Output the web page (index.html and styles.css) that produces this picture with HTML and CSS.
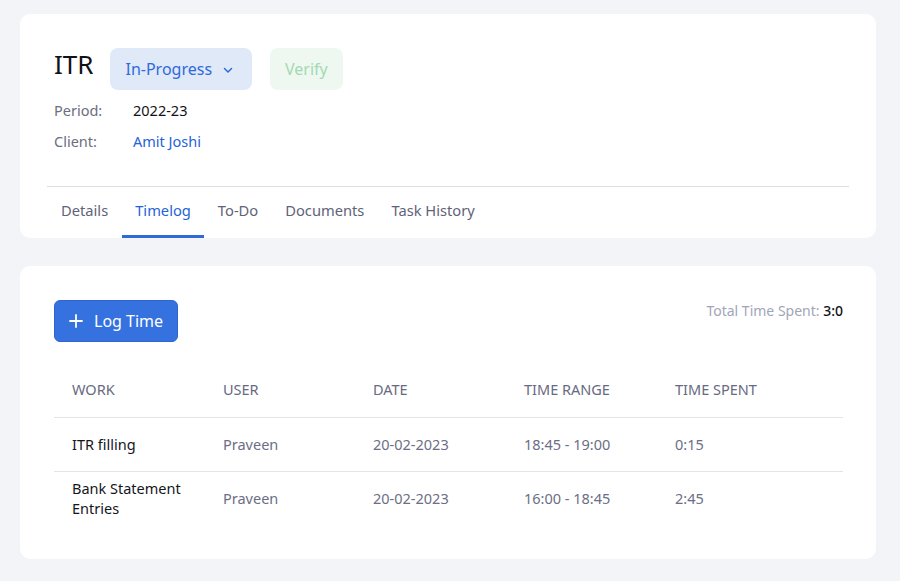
FILE: index.html
```html
<!DOCTYPE html>
<html>
<head>
<meta charset="utf-8">
<link rel="stylesheet" href="styles.css">
</head>
<body>
<div class="page">
  <section class="card task-card">
    <div class="task-head">
      <div class="title-row">
        <h1 class="title">ITR</h1>
        <button class="status-btn">In-Progress
          <svg class="chev" width="12" height="12" viewBox="0 0 12 12"><path d="M2.5 4.5 L6 8 L9.5 4.5" fill="none" stroke="#2f6bd8" stroke-width="1.5" stroke-linecap="round" stroke-linejoin="round"/></svg>
        </button>
        <button class="verify-btn">Verify</button>
      </div>
      <div class="meta-row"><span class="meta-label">Period:</span><span class="meta-value">2022-23</span></div>
      <div class="meta-row"><span class="meta-label">Client:</span><span class="meta-value link">Amit Joshi</span></div>
    </div>
    <nav class="tabs">
      <a class="tab">Details</a>
      <a class="tab active">Timelog</a>
      <a class="tab">To-Do</a>
      <a class="tab">Documents</a>
      <a class="tab">Task History</a>
    </nav>
  </section>

  <section class="card timelog-card">
    <div class="toolbar">
      <button class="log-btn">
        <svg width="14" height="14" viewBox="0 0 14 14"><path d="M7 1 V13 M1 7 H13" stroke="#fff" stroke-width="1.8" stroke-linecap="round"/></svg>
        Log Time
      </button>
      <div class="total">Total Time Spent: <span class="total-val">3:0</span></div>
    </div>
    <table class="log-table">
      <colgroup>
        <col class="c1"><col class="c2"><col class="c3"><col class="c4"><col>
      </colgroup>
      <thead>
        <tr><th>Work</th><th>User</th><th>Date</th><th>Time Range</th><th>Time Spent</th></tr>
      </thead>
      <tbody>
        <tr><td class="work">ITR filling</td><td>Praveen</td><td>20-02-2023</td><td>18:45 - 19:00</td><td>0:15</td></tr>
        <tr><td class="work">Bank Statement Entries</td><td>Praveen</td><td>20-02-2023</td><td>16:00 - 18:45</td><td>2:45</td></tr>
      </tbody>
    </table>
  </section>
</div>
</body>
</html>
```

FILE: styles.css
```css
* { box-sizing: border-box; }
html, body { margin: 0; padding: 0; }
body {
  background: #f3f4f8;
  font-family: "Noto Sans", "Open Sans", sans-serif;
  color: #15161c;
}
.page {
  padding: 14px 24px 0 20px;
  display: flex;
  flex-direction: column;
  gap: 28px;
}
.card {
  background: #fff;
  border-radius: 10px;
}
.task-card {
  padding: 34px 27px 0;
}
.task-head {
  padding: 0 7px 35px;
  border-bottom: 1px solid #dfe0e4;
}
.title-row {
  display: flex;
  align-items: center;
  height: 42px;
}
.title {
  margin: 0 17px 0 0;
  font-size: 26px;
  font-weight: 400;
  line-height: 32px;
  color: #111217;
  position: relative;
  top: -5px;
}
button {
  font-family: inherit;
  border: none;
  cursor: pointer;
}
.status-btn {
  height: 42px;
  background: #dfe9f8;
  color: #2f6bd8;
  font-size: 16px;
  border-radius: 8px;
  padding: 0 18px 0 15px;
  display: flex;
  align-items: center;
  gap: 10px;
}
.chev { margin-top: 1px; }
.verify-btn {
  margin-left: 18px;
  height: 42px;
  background: #eef8f1;
  color: #a3dab2;
  font-size: 16px;
  border-radius: 8px;
  padding: 0 15px;
}
.meta-row {
  display: flex;
  font-size: 14.5px;
  line-height: 20px;
  margin-top: 11px;
}
.title-row + .meta-row { margin-top: 10px; }
.meta-label {
  width: 79px;
  color: #6b6f80;
}
.meta-value { color: #111217; }
.meta-value.link { color: #2563d9; }
.tabs {
  display: flex;
  gap: 1px;
  padding-left: 1px;
}
.tab {
  font-size: 14.7px;
  color: #5f6378;
  padding: 13px 13px 15px;
  line-height: 20px;
  border-bottom: 3px solid transparent;
}
.tab.active {
  color: #2563d9;
  border-bottom-color: #2f6bd8;
}
.timelog-card {
  padding: 34px 33px 34px 34px;
}
.toolbar {
  display: flex;
  justify-content: space-between;
  align-items: flex-start;
  margin-bottom: 22px;
}
.log-btn {
  height: 42px;
  background: #3572e0;
  color: #fff;
  font-size: 16px;
  border-radius: 6px;
  padding: 0 14px;
  display: flex;
  align-items: center;
  gap: 11px;
  border: 1px solid #2e66cf;
}
.total {
  font-size: 14px;
  color: #a2a5b6;
  line-height: 20px;
  padding-top: 1px;
}
.total-val { color: #111217; font-weight: 500; }
.log-table {
  width: 100%;
  border-collapse: collapse;
  font-size: 14.5px;
}
.c1 { width: 151px; }
.c2 { width: 150px; }
.c3 { width: 151px; }
.c4 { width: 151px; }
.log-table thead tr { height: 53px; }
.log-table tbody tr { height: 54px; }
.log-table th {
  text-align: left;
  font-weight: 400;
  text-transform: uppercase;
  color: #676a82;
  padding: 5px 18px 8px;
  line-height: 20px;
  border-bottom: 1px solid #e3e4e8;
}
.log-table td {
  padding: 6px 18px;
  line-height: 20px;
  color: #6b6e85;
  vertical-align: middle;
}
.log-table tbody tr:not(:last-child) td { border-bottom: 1px solid #e3e4e8; }
.log-table td.work { color: #15161c; }
```
